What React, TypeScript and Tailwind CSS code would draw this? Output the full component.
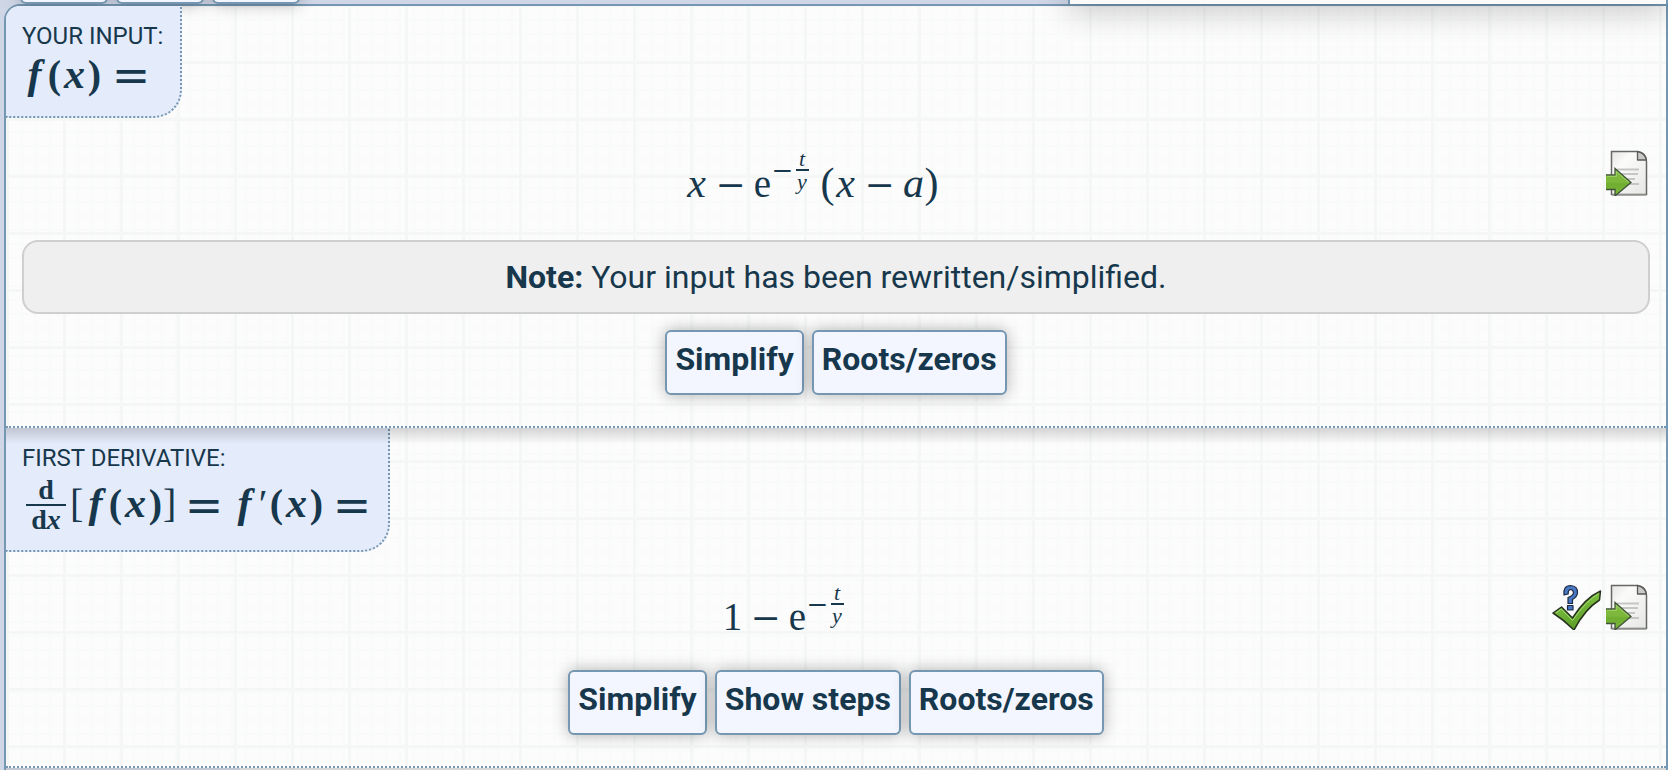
import type { ReactNode } from "react";

const GRID =
  "bg-[#fcfcfc] bg-[linear-gradient(to_right,#f5f6f6_3px,transparent_3px),linear-gradient(to_bottom,#f5f6f6_3px,transparent_3px),linear-gradient(to_right,#f9fafa_2px,transparent_2px),linear-gradient(to_bottom,#f9fafa_2px,transparent_2px)] bg-[size:57px_57px,57px_57px,14px_14px,14px_14px] bg-[position:57px_0px,0px_55px,57px_0px,0px_55px]";

function Variable({ children }: { children: ReactNode }) {
  return <i className="w-[22px] text-center text-[42px]">{children}</i>;
}

function Minus() {
  return <span className="w-[46px] text-center font-['DejaVu_Serif',serif] text-[36px]">−</span>;
}

function Paren({ children }: { children: ReactNode }) {
  return <span className="w-[14px] text-center text-[42px]">{children}</span>;
}

function Exponent() {
  return (
    <span className="flex items-center self-start text-[22px] leading-[21px]">
      <span className="w-5 text-center font-['DejaVu_Serif',serif] text-[26px] leading-[40px]">−</span>
      <span className="ml-1 flex w-[13px] flex-col items-center">
        <i>t</i>
        <span className="h-0.5 w-full bg-[#17384c]" />
        <i>y</i>
      </span>
    </span>
  );
}

function Formula({ children }: { children: ReactNode }) {
  return (
    <div className="flex h-[66px] flex-1 items-baseline justify-center font-['Liberation_Serif',serif] text-[39px] leading-[70px]">
      {children}
    </div>
  );
}

function BoldVar({ children }: { children: ReactNode }) {
  return <i className="w-[25px] text-center text-[42px]">{children}</i>;
}

function BoldParen({ children }: { children: ReactNode }) {
  return <span className="w-[15px] text-center text-[40px]">{children}</span>;
}

function Equals({ className }: { className: string }) {
  return (
    <span className={`self-start text-center font-['DejaVu_Sans',sans-serif] text-[46px] font-normal ${className}`}>
      =
    </span>
  );
}

function Badge({ label, children }: { label: string; children: ReactNode }) {
  return (
    <header className="relative w-fit rounded-br-[28px] border-r-2 border-b-2 border-dotted border-[#7597b2] bg-[#e4ebfa] pl-4">
      <h2 className="pt-4 text-2xl leading-[28px]">{label}</h2>
      {children}
    </header>
  );
}

function ActionButton({ children }: { children: ReactNode }) {
  return (
    <button
      type="button"
      className="h-[65px] rounded-md border-2 border-[#7597b2] bg-[#f3f6ff] px-2 pb-2 text-[32px] leading-[40px] font-bold shadow-[0_0_16px_rgba(0,0,0,0.3)]"
    >
      {children}
    </button>
  );
}

function ExportIcon() {
  return (
    <svg viewBox="0 0 48 48" className="size-12" aria-hidden="true">
      <defs>
        <linearGradient id="sheet" x1="0" y1="0" x2="1" y2="1">
          <stop offset="0" stopColor="#e4e5e3" />
          <stop offset="0.3" stopColor="#fbfbfa" />
          <stop offset="1" stopColor="#e6e6e4" />
        </linearGradient>
        <linearGradient id="arrow" x1="0" y1="0" x2="0" y2="1">
          <stop offset="0" stopColor="#7fb83f" />
          <stop offset="0.5" stopColor="#7db73b" />
          <stop offset="0.55" stopColor="#6fae30" />
          <stop offset="1" stopColor="#7ab53c" />
        </linearGradient>
      </defs>
      <path d="M9.500 3.500H35.500Q44.500 5 44.500 13.500V46.500H9.500Z" fill="url(#sheet)" stroke="#666864" strokeWidth="1.500" />
      <path d="M10 47H44" stroke="#999b97" strokeWidth="1.500" />
      <path d="M35.500 3.500V12H44.500Q43 5 35.500 3.500Z" fill="#c9cac7" stroke="#595b57" strokeWidth="1.300" strokeLinejoin="round" />
      <path d="M15 21.500H37M15 26H36M22 31H33M22 36H37" stroke="#c6c7c4" strokeWidth="2.200" />
      <path d="M4 27H13V20.500L29 34.500L13 48V41.500H4Z" fill="url(#arrow)" />
      <path d="M4 27H13V20.500L29 34.500L13 48V41.500H4" fill="none" stroke="#41523a" strokeWidth="1.300" />
      <path d="M5 28.300H14.300V23.400L27 34.500" fill="none" stroke="#a2d468" strokeWidth="1" />
    </svg>
  );
}

function CheckIcon() {
  return (
    <svg viewBox="0 0 50 48" className="h-12 w-[50px]" aria-hidden="true">
      <defs>
        <linearGradient id="tick" x1="0" y1="0" x2="0.3" y2="1">
          <stop offset="0" stopColor="#8aca4c" />
          <stop offset="1" stopColor="#5c9f28" />
        </linearGradient>
      </defs>
      <path d="M1 31L9.500 25L20.500 36Q33 16 48.500 9L47.500 18Q33 27 22 48Q12 38 1 31Z" fill="url(#tick)" stroke="#27321f" strokeWidth="1.500" strokeLinejoin="round" />
      <path d="M4 31L9.300 27L20.500 38.500Q34 19 46.500 11.500" fill="none" stroke="#a5db70" strokeWidth="1" />
      <path d="M12 13Q11 3.500 18.500 3.500Q26 4 25.500 11Q25 15 20.500 17.500V21.500H16V15.500Q21.500 13.500 21.500 10.500Q21 7.500 18.500 7.500Q16 8 16.200 12ZM15.500 23.500H21V28H15.500Z" fill="#4778c4" stroke="#202a40" strokeWidth="1.200" strokeLinejoin="round" />
    </svg>
  );
}

function IconButton({ label, children }: { label: string; children: ReactNode }) {
  return (
    <button type="button" aria-label={label} className="block">
      {children}
    </button>
  );
}

function TopShade() {
  return <div className="pointer-events-none absolute inset-x-0 top-0 h-4 bg-linear-to-b from-black/16 to-transparent" />;
}

export default function App() {
  return (
    <div className="min-h-screen overflow-hidden bg-[#cfd7e7] pl-1 font-['Roboto',sans-serif] text-[#17384c]">
      <nav className="relative z-10 flex h-1 items-end gap-2 pl-4" aria-label="Views">
        <button type="button" aria-label="First view" className="h-8 w-[88px] rounded-md border-2 border-[#7597b2] bg-[#f3f6ff] shadow-[0_0_16px_rgba(0,0,0,0.3)]" />
        <button type="button" aria-label="Second view" className="h-8 w-[88px] rounded-md border-2 border-[#7597b2] bg-[#f3f6ff] shadow-[0_0_16px_rgba(0,0,0,0.3)]" />
        <button type="button" aria-label="Third view" className="h-8 w-[88px] rounded-md border-2 border-[#7597b2] bg-[#f3f6ff] shadow-[0_0_16px_rgba(0,0,0,0.3)]" />
        <div className="ml-auto h-16 w-[600px] border-x-2 border-[#7597b2] bg-[#fafafa] shadow-[0_8px_32px_rgba(0,0,0,0.2)]" />
      </nav>

      <main className={`overflow-hidden rounded-tl-[16px] border-2 border-b-0 border-[#7597b2] ${GRID}`}>
        <section className="relative z-20 border-b-2 border-dotted border-[#7597b2] pb-[31px]">
          <Badge label="YOUR INPUT:">
            <div className="flex h-[66px] items-baseline pr-5 font-['Liberation_Serif',serif] leading-[48px] font-bold">
              <BoldVar>f</BoldVar>
              <BoldParen>(</BoldParen>
              <BoldVar>x</BoldVar>
              <BoldParen>)</BoldParen>
              <Equals className="w-[58px] leading-[50px]" />
            </div>
          </Badge>
          <div className="mt-[30px] flex items-start px-4">
            <Formula>
              <Variable>x</Variable>
              <Minus />
              <span className="w-[18px] text-center">e</span>
              <Exponent />
              <span className="ml-3 flex items-baseline">
                <Paren>(</Paren>
                <Variable>x</Variable>
                <Minus />
                <Variable>a</Variable>
                <Paren>)</Paren>
              </span>
            </Formula>
            <IconButton label="Export input">
              <ExportIcon />
            </IconButton>
          </div>
          <p className="mx-4 mt-[26px] rounded-2xl border-2 border-[#cfcfcf] bg-[#efefef] py-4 text-center text-[32px] leading-[38px]">
            <b>Note:</b> Your input has been rewritten/simplified.
          </p>
          <div className="mt-4 flex justify-center gap-2">
            <ActionButton>Simplify</ActionButton>
            <ActionButton>Roots/zeros</ActionButton>
          </div>
        </section>

        <section className="relative z-20 border-b-2 border-dotted border-[#7597b2] pb-[31px]">
          <Badge label="FIRST DERIVATIVE:">
            <div className="flex h-[78px] items-baseline pr-2 font-['Liberation_Serif',serif] leading-[62px] font-bold">
              <span className="ml-1 flex w-10 flex-col items-center self-start pt-1 text-[28px] leading-[28px]">
                <span>d</span>
                <span className="h-0.5 w-full bg-[#17384c]" />
                <span>
                  d<i>x</i>
                </span>
              </span>
              <span className="ml-1 w-[13px] text-center text-[40px] font-normal">[</span>
              <BoldVar>f</BoldVar>
              <BoldParen>(</BoldParen>
              <BoldVar>x</BoldVar>
              <BoldParen>)</BoldParen>
              <span className="w-[13px] text-center text-[40px] font-normal">]</span>
              <Equals className="w-14 leading-[66px]" />
              <BoldVar>f</BoldVar>
              <span className="w-3 text-center text-[40px] font-normal">′</span>
              <BoldParen>(</BoldParen>
              <BoldVar>x</BoldVar>
              <BoldParen>)</BoldParen>
              <Equals className="w-14 leading-[66px]" />
            </div>
          </Badge>
          <div className="mt-[30px] flex items-start pr-4 pl-2">
            <Formula>
              <span className="w-5 text-center">1</span>
              <Minus />
              <span className="w-[18px] text-center">e</span>
              <Exponent />
            </Formula>
            <div className="flex">
              <IconButton label="Check answer">
                <CheckIcon />
              </IconButton>
              <IconButton label="Export derivative">
                <ExportIcon />
              </IconButton>
            </div>
          </div>
          <div className="mt-[22px] flex justify-center gap-2">
            <ActionButton>Simplify</ActionButton>
            <ActionButton>Show steps</ActionButton>
            <ActionButton>Roots/zeros</ActionButton>
          </div>
          <TopShade />
        </section>

        <section className="relative h-0.5">
          <div className="h-full w-[234px] bg-[#e4ebfa]" />
          <TopShade />
        </section>
      </main>
    </div>
  );
}
